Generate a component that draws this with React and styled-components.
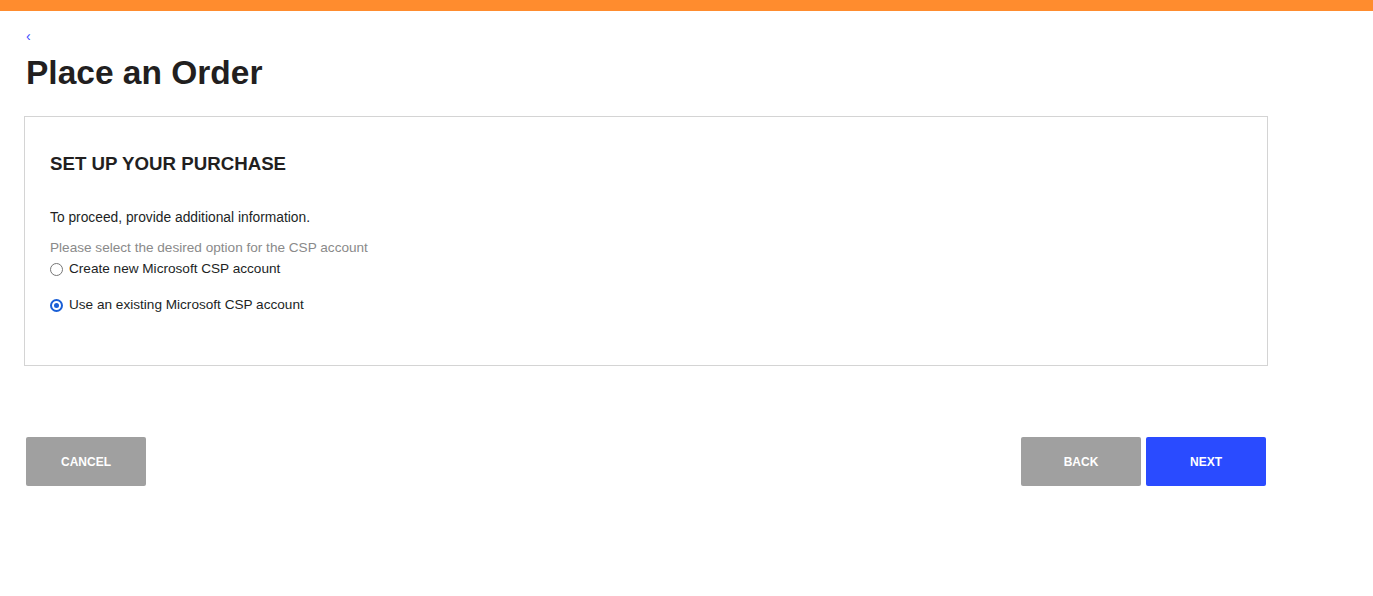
import React, { useState } from 'react';
import styled, { createGlobalStyle } from 'styled-components';

const GlobalStyle = createGlobalStyle`
  body {
    margin: 0;
    background: #fff;
    font-family: "Liberation Sans", Arial, sans-serif;
    color: #1d1d1f;
  }
`

const TopBar = styled.div`
  height: 11px;
  background: #ff8c2e;
`

const Page = styled.div`
  padding: 18px 105px 0 24px;
`

const BackLink = styled.a`
  display: block;
  color: #3b4bff;
  font-size: 14px;
  line-height: 14px;
  padding-left: 2px;
  text-decoration: none;
  cursor: pointer;
`

const Title = styled.h1`
  margin: 12px 0 0 2px;
  font-size: 33.5px;
  line-height: 36px;
  font-weight: 700;
  color: #221f1f;
`

const Card = styled.section`
  margin-top: 25px;
  border: 1px solid #d4d4d4;
  padding: 36px 25px 50px;
`

const CardTitle = styled.h2`
  margin: 0;
  font-size: 18.7px;
  line-height: 22px;
  font-weight: 700;
  color: #221f1f;
`

const Intro = styled.p`
  margin: 35px 0 0;
  font-size: 13.8px;
  line-height: 16px;
  color: #221f1f;
`

const Hint = styled.p`
  margin: 14px 0 0;
  font-size: 13.6px;
  line-height: 16px;
  color: #8a8a8a;
`

const Options = styled.div`
  display: flex;
  flex-direction: column;
  gap: 16px;
  margin-top: 3px;
`

const Option = styled.label`
  display: flex;
  align-items: center;
  gap: 6px;
  font-size: 13.6px;
  line-height: 20px;
  color: #221f1f;
  cursor: pointer;
`

const RadioDot = styled.span`
  width: 13px;
  height: 13px;
  border-radius: 50%;
  box-sizing: border-box;
  border: ${(p) => (p.checked ? '2px solid #1a5fd6' : '1.5px solid #767676')};
  display: flex;
  align-items: center;
  justify-content: center;
  &::after {
    content: '';
    width: 5px;
    height: 5px;
    border-radius: 50%;
    background: ${(p) => (p.checked ? '#1a5fd6' : 'transparent')};
  }
`

const Actions = styled.div`
  display: flex;
  justify-content: space-between;
  margin-top: 71px;
  padding: 0 2px;
`

const Group = styled.div`
  display: flex;
  gap: 5px;
`

const Button = styled.button`
  width: 120px;
  height: 49px;
  border: none;
  border-radius: 2px;
  background: ${(p) => (p.primary ? '#2a4bff' : '#a0a0a0')};
  color: #fff;
  font-family: "Liberation Sans", Arial, sans-serif;
  font-size: 12px;
  font-weight: 700;
  cursor: pointer;
`

const options = [
  { id: 'new', label: 'Create new Microsoft CSP account' },
  { id: 'existing', label: 'Use an existing Microsoft CSP account' },
]

export default function App() {
  const [choice, setChoice] = useState('existing')

  return (
    <>
      <GlobalStyle />
      <TopBar />
      <Page>
        <BackLink>‹</BackLink>
        <Title>Place an Order</Title>
        <Card>
          <CardTitle>SET UP YOUR PURCHASE</CardTitle>
          <Intro>To proceed, provide additional information.</Intro>
          <Hint>Please select the desired option for the CSP account</Hint>
          <Options>
            {options.map((o) => (
              <Option key={o.id} onClick={() => setChoice(o.id)}>
                <RadioDot checked={choice === o.id} />
                {o.label}
              </Option>
            ))}
          </Options>
        </Card>
        <Actions>
          <Button>CANCEL</Button>
          <Group>
            <Button>BACK</Button>
            <Button primary>NEXT</Button>
          </Group>
        </Actions>
      </Page>
    </>
  )
}
